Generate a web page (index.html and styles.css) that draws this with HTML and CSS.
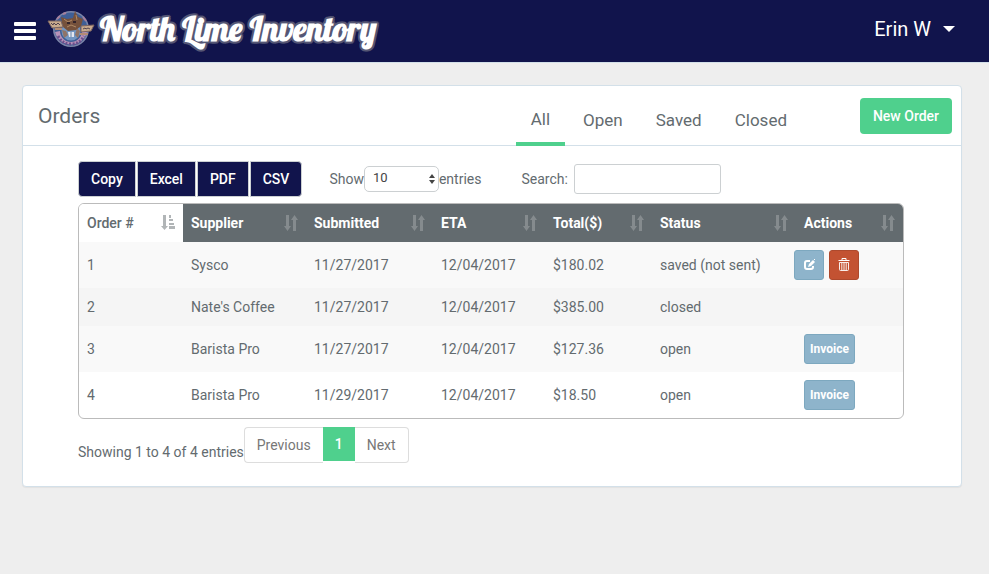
FILE: index.html
```html
<!DOCTYPE html>
<html lang="en">
<head>
<meta charset="utf-8">
<meta name="viewport" content="width=device-width, initial-scale=1">
<title>North Lime Inventory</title>
<link rel="stylesheet" href="styles.css">
</head>
<body>
<svg class="defs" width="0" height="0" aria-hidden="true">
  <symbol id="sort" viewBox="0 0 14 16"><path d="M2 0h3v11h2l-3.500 5L0 11h2zM9 16h3V5h2l-3.500-5L7 5h2z"/></symbol>
  <symbol id="sort-asc" viewBox="0 0 14 16"><path d="M2 0h3v11h2l-3.500 4L0 11h2zM8 0h2v3H8zM8 4h4v2H8zM8 8h5v2H8zM8 11h6v3H8z"/></symbol>
</svg>
<header class="navbar">
  <button class="menu" type="button" aria-label="Menu"><span></span><span></span><span></span></button>
  <a class="brand" href="#">
    <svg class="logo" viewBox="0 0 48 38" aria-hidden="true">
      <circle cx="24" cy="19" r="18" fill="#7c86a8"/>
      <circle cx="24" cy="19" r="16.500" fill="#3f5f96"/>
      <path d="M8 22a16.500 16.500 0 0 0 32 0l-5-1a11 11 0 0 1-22 0z" fill="#b892b8"/>
      <path d="M11 26q4 8 13 8t13-8" fill="none" stroke="#6b4f8c" stroke-width="3" stroke-dasharray="2 1.500"/>
      <circle cx="24" cy="21" r="9.500" fill="#7396c2"/>
      <path d="M15 20l4 1 2 4-4 3zM30 18l3 3-2 7-3-3z" fill="#8f7468"/>
      <path d="M14 7l6 2 6-1 2-7 3 6 5 2-2 7-5 4-8 1-5-4-1-4z" fill="#75513c"/>
      <path d="M17 9l4 3 4-2M20 17l4-2 5 2M29 5l1 5" fill="none" stroke="#b08a66"/>
      <path d="M20 13h3M26 12h3" stroke="#33242b" stroke-width="2"/>
      <path d="M10 9l3-3M36 7l3 4M16 4l3-1" stroke="#a67f9b" stroke-width="2"/>
      <path d="M1 11h13l2 6-11 1z" fill="#c9ab8d" stroke="#7d6560"/>
      <path d="M34 16l13-1-3 6-10 1z" fill="#c9ab8d" stroke="#7d6560"/>
      <path d="M8 19h7M33 24h8" stroke="#b48c75" stroke-width="2"/>
      <path d="M4 13l2 2 1-2 2 2 2-2 2 2M36 19l2-1 1 1 2-1 2 1" fill="none" stroke="#54434e"/>
      <path d="M21 22h6v5h-5z" fill="#e4e7f0"/><path d="M24 22v5" stroke="#6583a9"/>
    </svg>
    <span class="wordmark">North Lime Inventory</span>
  </a>
  <button class="user" type="button">Erin W <span class="caret"></span></button>
</header>
<main class="page">
  <section class="panel">
    <div class="panel-heading">
      <h1>Orders</h1>
      <nav class="tabs">
        <a class="active" href="#">All</a><a href="#">Open</a><a href="#">Saved</a><a href="#">Closed</a>
      </nav>
      <button class="new-order" type="button">New Order</button>
    </div>
    <div class="panel-body">
      <div class="toolbar">
        <div class="exports">
          <button type="button">Copy</button><button type="button">Excel</button><button type="button">PDF</button><button type="button">CSV</button>
        </div>
        <div class="length">
          <label for="length">Show</label>
          <span class="select">
            <select id="length"><option>10</option><option>25</option><option>50</option></select>
            <svg viewBox="0 0 6 10" aria-hidden="true"><path d="M0 4l3-4 3 4zM0 6h6l-3 4z"/></svg>
          </span>
          <span>entries</span>
        </div>
        <div class="search"><label for="search">Search:</label><input id="search" type="search"></div>
      </div>
      <div class="table-box">
        <table>
          <colgroup><col class="c-order"><col class="c-supplier"><col class="c-submitted"><col class="c-eta"><col class="c-total"><col class="c-status"><col class="c-actions"></colgroup>
          <thead>
            <tr>
              <th class="sorted"><div>Order #<svg><use href="#sort-asc"/></svg></div></th>
              <th><div>Supplier<svg><use href="#sort"/></svg></div></th>
              <th><div>Submitted<svg><use href="#sort"/></svg></div></th>
              <th><div>ETA<svg><use href="#sort"/></svg></div></th>
              <th><div>Total($)<svg><use href="#sort"/></svg></div></th>
              <th><div>Status<svg><use href="#sort"/></svg></div></th>
              <th><div>Actions<svg><use href="#sort"/></svg></div></th>
            </tr>
          </thead>
          <tbody>
            <tr class="shade-1"><td>1</td><td>Sysco</td><td>11/27/2017</td><td>12/04/2017</td><td>$180.02</td><td>saved (not sent)</td>
              <td class="icons"><div class="row-actions">
                <button class="btn" type="button" aria-label="Edit"><svg viewBox="0 0 14 14"><path d="M8 3H5Q3 3 3 5v4q0 2 2 2h4q2 0 2-2V8" fill="none" stroke="#fff" stroke-width="2"/><path d="M6 9l1-3 4-4 2 2-4 4zM12 1h1v1h-1z" fill="#fff"/></svg></button>
                <button class="btn danger" type="button" aria-label="Delete"><svg viewBox="0 0 14 14"><path d="M5 2.500V.5h4v2M1.500 2.500h11" fill="none" stroke="#fff"/><path d="M2.500 4.500h9v7q0 1-1 1h-7q-1 0-1-1zM4.800 5v7M7 5v7M9.200 5v7" fill="none" stroke="#fff" stroke-width=".9"/></svg></button>
              </div></td></tr>
            <tr class="shade-2"><td>2</td><td>Nate's Coffee</td><td>11/27/2017</td><td>12/04/2017</td><td>$385.00</td><td>closed</td><td></td></tr>
            <tr class="shade-1"><td>3</td><td>Barista Pro</td><td>11/27/2017</td><td>12/04/2017</td><td>$127.36</td><td>open</td><td><div class="row-actions"><button class="btn" type="button">Invoice</button></div></td></tr>
            <tr><td>4</td><td>Barista Pro</td><td>11/29/2017</td><td>12/04/2017</td><td>$18.50</td><td>open</td><td><div class="row-actions"><button class="btn" type="button">Invoice</button></div></td></tr>
          </tbody>
        </table>
      </div>
      <div class="footer">
        <p>Showing 1 to 4 of 4 entries</p>
        <nav class="pagination" aria-label="Pages"><a href="#">Previous</a><a class="current" href="#">1</a><a href="#">Next</a></nav>
      </div>
    </div>
  </section>
</main>
</body>
</html>
```

FILE: styles.css
```css
* { box-sizing: border-box; }
body {
  margin: 0;
  background: #eee;
  color: #636b6f;
  font: 14px/22px Roboto, sans-serif;
}
a { color: inherit; text-decoration: none; }
button, input, select { font: inherit; }
button { cursor: pointer; }
.defs { position: absolute; }

.navbar {
  display: flex;
  align-items: center;
  height: 63px;
  padding: 0 34px 4px 14px;
  background: #11144c;
  border-bottom: 1px solid #d3e0e9;
}
.menu {
  display: flex;
  flex-direction: column;
  gap: 3px;
  width: 22px;
  padding: 4px 0 0;
  border: 0;
  background: none;
}
.menu span { height: 4px; border-radius: 1px; background: #fff; }
.brand { display: flex; align-items: center; gap: 5px; margin-left: 11px; }
.logo { width: 48px; height: 38px; }
.wordmark {
  color: #fff;
  font: bold 34px/40px Lobster, "Liberation Serif", serif;
  white-space: nowrap;
  text-shadow: 1px 2px #555674, -1px -2px #555674, 2px -1px #555674, -2px 1px #555674, 2px 1px #555674, -2px -1px #555674, 1px -2px #555674, -1px 2px #555674;
}
.user {
  display: flex;
  align-items: center;
  gap: 12px;
  margin-left: auto;
  padding: 0;
  border: 0;
  background: none;
  color: #fff;
  font-size: 20px;
}
.caret { border: 6px solid transparent; border-top-color: #fff; border-bottom: 0; }

.page { padding: 22px 27px 22px 22px; }
.panel {
  background: #fff;
  border: 1px solid #d3e0e9;
  border-radius: 4px;
  box-shadow: 0 1px 1px rgba(0, 0, 0, .05);
}
.panel-heading {
  display: flex;
  align-items: center;
  height: 60px;
  padding: 0 9px 0 15px;
  border-bottom: 1px solid #d3e0e9;
}
h1 { margin: 0; font-size: 21px; line-height: 24px; font-weight: 400; }
.tabs { display: flex; gap: 3px; height: 60px; margin-left: auto; font-size: 17px; }
.tabs a { padding: 23px 15px 0; }
.tabs .active { padding-top: 22px; border-bottom: 4px solid #4fd08d; }
.new-order {
  width: 92px;
  height: 36px;
  margin-left: 58px;
  padding: 0;
  border: 0;
  border-radius: 4px;
  background: #4fd08d;
  color: #fff;
  font-weight: 500;
}
.panel-body { padding: 15px 57px 23px 55px; }

.toolbar { display: flex; align-items: center; height: 36px; }
.exports { display: flex; gap: 1px; }
.exports button {
  height: 36px;
  padding: 0 12px;
  border: 1px solid #ccd0d2;
  background: #11144c;
  color: #fff;
  font-weight: 500;
}
.exports button:first-child { border-radius: 4px 0 0 4px; }
.exports button:last-child { border-radius: 0 4px 4px 0; }
.length { display: flex; align-items: center; margin-left: 27px; }
.select { position: relative; }
.select select {
  display: block;
  width: 75px;
  height: 26px;
  padding: 0 8px 2px;
  appearance: none;
  border: 1px solid #ccd0d2;
  border-radius: 5px;
  background: #fff;
  color: #444;
  font-size: 13px;
}
.select svg { position: absolute; right: 4px; top: 8px; width: 6px; height: 10px; fill: #444; }
.search { display: flex; align-items: center; gap: 6px; margin-left: 40px; }
.search input {
  width: 147px;
  height: 30px;
  border: 1px solid #ccd0d2;
  border-radius: 3px;
  background: #fff;
}

.table-box {
  margin-top: 6px;
  overflow: hidden;
  border: 1px solid #bbb;
  border-radius: 6px;
}
table { width: 100%; table-layout: fixed; border-collapse: collapse; }
.c-order { width: 104px; }
.c-supplier { width: 123px; }
.c-submitted { width: 127px; }
.c-eta { width: 112px; }
.c-total { width: 107px; }
.c-status { width: 144px; }
.c-actions { width: 107px; }
th, td { height: 38px; padding: 0 8px; text-align: left; white-space: nowrap; }
th { background: #636b6f; color: #fff; font-weight: 700; }
th div { display: flex; align-items: center; justify-content: space-between; }
th svg { width: 14px; height: 16px; fill: #858b8e; }
th.sorted { background: #fff; color: #636b6f; font-weight: 500; }
.sorted svg { fill: #b1b5b7; }
.shade-1 { background: #f9f9f9; }
.shade-2 { background: #f5f5f5; }
td.icons { padding: 0; }
.icons .row-actions { margin-left: -2px; }
.row-actions { display: flex; gap: 5px; padding: 8px 0; }
.btn {
  display: flex;
  align-items: center;
  justify-content: center;
  min-width: 30px;
  height: 30px;
  padding: 0 5px;
  border: 1px solid #7da8bf;
  border-radius: 3px;
  background: #8eb4cb;
  color: #fff;
  font-size: 12px;
  font-weight: 700;
}
.btn svg { width: 14px; height: 14px; }
.danger { background: #c35232; border-color: #ad492d; }

.footer { display: flex; align-items: flex-start; margin-top: 8px; }
.footer p { margin: 14px 0 0; }
.pagination { display: flex; }
.pagination a {
  height: 36px;
  padding: 6px 12px;
  border: 1px solid #ddd;
  color: #777;
}
.pagination a:first-child { border-right: 0; border-radius: 4px 0 0 4px; }
.pagination a:last-child { border-left: 0; border-radius: 0 4px 4px 0; }
.pagination .current {
  height: 34px;
  border: 0;
  background: #4fd08d;
  color: #fff;
  font-weight: 500;
}
```
